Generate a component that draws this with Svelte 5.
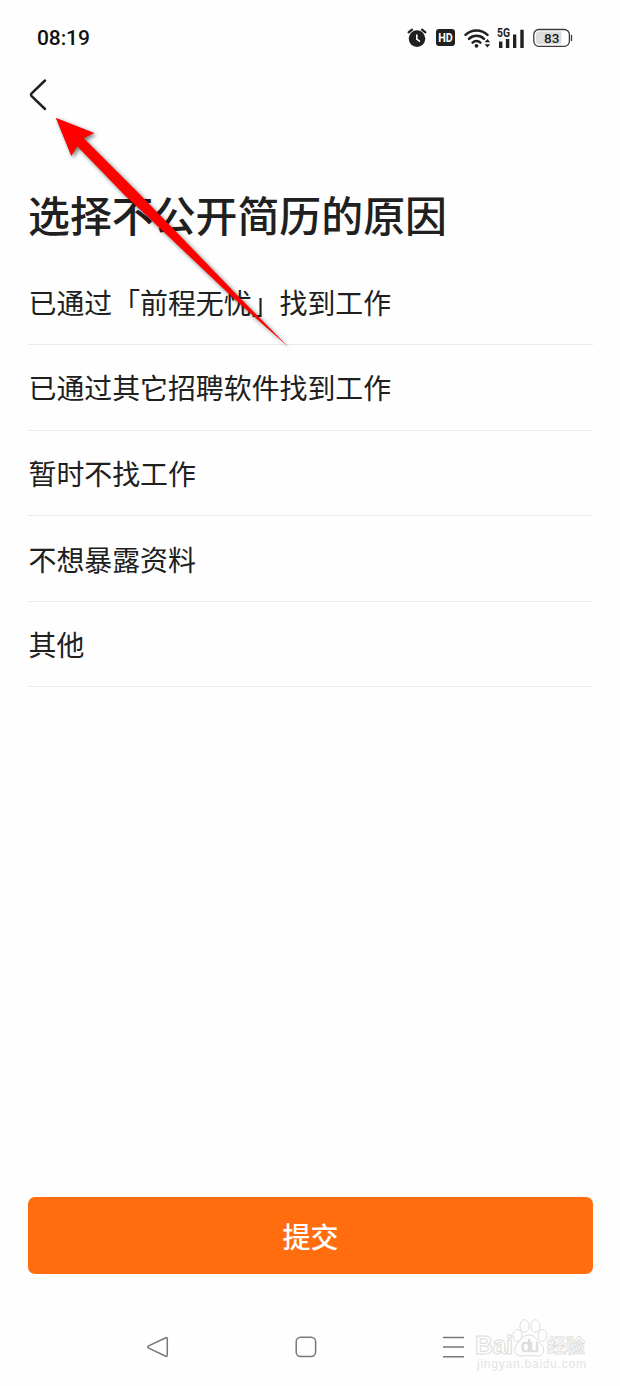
<script lang="ts">
  // Reason picker shown after a resume is switched to private: a flat list
  // of reasons and one submit button, framed by the phone's own bars.
  const reasons = [
    "已通过「前程无忧」找到工作",
    "已通过其它招聘软件找到工作",
    "暂时不找工作",
    "不想暴露资料",
    "其他",
  ];

  let picked = $state("");
</script>

<div class="screen">
  <header class="status">
    <span class="time">08:19</span>
    <div class="indicators">
      <svg class="alarm" width="20" height="22" viewBox="0 0 20 22" aria-hidden="true">
        <path d="M1.6 5.4 5 2.6M18.4 5.4 15 2.6" stroke="#202020" stroke-width="2.2" stroke-linecap="round" />
        <circle cx="10" cy="11.6" r="8.3" fill="#202020" />
        <path d="M9.8 8v4.2l2.6 2" fill="none" stroke="#fff" stroke-width="1.6" stroke-linecap="round" />
      </svg>
      <svg class="hd" width="19" height="17" viewBox="0 0 19 17" aria-hidden="true">
        <rect width="19" height="17" rx="3" fill="#202020" />
        <text x="9.5" y="13.2" text-anchor="middle" textLength="14.5" lengthAdjust="spacingAndGlyphs">HD</text>
      </svg>
      <svg class="wifi" width="28" height="22" viewBox="0 0 28 22" aria-hidden="true">
        <g fill="none" stroke="#202020" stroke-width="2.5" stroke-linecap="round">
          <path d="M1.5 7.8a16 16 0 0 1 22 0" />
          <path d="M5 11.8a11 11 0 0 1 15 0" />
          <path d="M8.6 15.6a5.8 5.8 0 0 1 7.8 0" />
        </g>
        <circle cx="12.5" cy="18.8" r="1.9" fill="#202020" />
        <path d="M20.6 15.2 23.4 12l2.8 3.2zM20.6 17.2h5.6l-2.8 3.4z" fill="#202020" />
      </svg>
      <svg class="signal" width="28" height="22" viewBox="0 0 28 22" aria-hidden="true">
        <text x="0" y="9.8" textLength="13" lengthAdjust="spacingAndGlyphs">5G</text>
        <path d="M2 14.5h3.4V21H2zM8.9 12h3.4v9H8.900zM16 7.500h3.300V21H16zM23.300 2.800h3.400V21h-3.400z" fill="#202020" />
      </svg>
      <svg class="battery" width="40" height="20" viewBox="0 0 40 20" aria-hidden="true">
        <rect x=".8" y="1.5" width="35.6" height="16.8" rx="5" fill="#fff" stroke="#3c3c3c" stroke-width="1.3" />
        <path d="M6 3.500h22.500v12.800H6a3 3 0 0 1-3-3V6.500a3 3 0 0 1 3-3z" fill="#dcdcdc" />
        <path d="M38.500 7.500v5" stroke="#3c3c3c" stroke-width="1.300" stroke-linecap="round" />
        <text x="18.700" y="14.800" text-anchor="middle">83</text>
      </svg>
    </div>
  </header>

  <nav class="topbar">
    <button type="button" class="back" aria-label="返回">
      <svg width="20" height="34" viewBox="0 0 20 34" aria-hidden="true">
        <path d="M17 2.500 3.400 15.600q-1 1.100 0 2.200L17 31" fill="none" stroke="#202020" stroke-width="2.500" stroke-linecap="round" />
      </svg>
    </button>
  </nav>

  <main>
    <h1>选择不公开简历的原因</h1>
    <ul>
      {#each reasons as reason (reason)}
        <li>
          <button type="button" aria-pressed={picked === reason} onclick={() => (picked = reason)}>
            {reason}
          </button>
        </li>
      {/each}
    </ul>
  </main>

  <button type="button" class="submit">提交</button>

  <footer class="navbar">
    <svg width="22" height="22" viewBox="0 0 22 22" aria-hidden="true">
      <path d="M18.800 1.700 1.700 9.800q-1.800 1.200 0 2.400L18.800 20.300q1.500.500 1.500-1.300V3q0-1.800-1.500-1.300z" />
    </svg>
    <svg width="22" height="22" viewBox="0 0 22 22" aria-hidden="true">
      <rect x="1.200" y="1.200" width="19.400" height="19.400" rx="4.500" />
    </svg>
    <svg width="22" height="22" viewBox="0 0 22 22" aria-hidden="true">
      <path d="M0 1.500h21M0 11h21M0 20.700h21" />
    </svg>
  </footer>

  <svg class="arrow" width="270" height="260" viewBox="0 0 270 260" aria-hidden="true">
    <path
      d="M15.700 17.700 54.300 33 43.700 38.300 97 91.500 133 128.500 198.500 196.500 248.700 247.300 196 200.500 127 135 84 94.500 37.300 46.300 31.300 56z"
    />
  </svg>

  <svg class="watermark" width="120" height="62" viewBox="0 0 120 62" aria-hidden="true">
    <g class="outline">
      <text x="0" y="39.500" font-size="25" textLength="38">Bai</text>
      <ellipse cx="42.500" cy="21.500" rx="4.500" ry="6" />
      <ellipse cx="49.500" cy="12" rx="4.600" ry="6.300" />
      <ellipse cx="60.500" cy="12" rx="4.600" ry="6.300" />
      <ellipse cx="67.500" cy="21.500" rx="4.300" ry="6" />
      <path d="M54 21c6 0 8 5 12 9 5 5 3 12-4 12-4 0-11-1-15 0-8 0-9-7-5-12 4-4 6-9 12-9z" />
      <text class="du" x="46" y="38" font-size="18" textLength="18">du</text>
      <text class="cjk" x="72" y="38.500" font-size="19" textLength="38">经验</text>
    </g>
    <text class="site" x="2" y="54" textLength="109">jingyan.baidu.com</text>
  </svg>
</div>

<style>
  :global(body) {
    margin: 0;
    background: #fff;
  }
  .screen {
    position: relative;
    display: flex;
    flex-direction: column;
    box-sizing: border-box;
    width: 620px;
    height: 1386px;
    overflow: hidden;
    background: #fefefe;
    color: #202020;
    font-family: "Noto Sans CJK SC", sans-serif;
  }
  button {
    padding: 0;
    border: 0;
    background: none;
    color: inherit;
    font: inherit;
    cursor: pointer;
  }
  svg {
    display: block;
    flex: none;
  }
  .status {
    display: flex;
    align-items: center;
    justify-content: space-between;
    height: 76px;
    padding: 0 47px 0 37px;
    box-sizing: border-box;
    font-family: Roboto, sans-serif;
  }
  .time {
    font-size: 21px;
    font-weight: 500;
    letter-spacing: -0.1px;
    color: #111;
  }
  .indicators {
    display: flex;
    align-items: center;
    margin-top: -1px;
  }
  .indicators text {
    font-family: Roboto, sans-serif;
    font-weight: 700;
    fill: #202020;
  }
  .alarm {
    margin-right: 9px;
  }
  .hd {
    margin-right: 9px;
  }
  .hd text {
    font-size: 13px;
    fill: #fff;
  }
  .wifi {
    margin-right: 5px;
  }
  .signal {
    margin-right: 8px;
  }
  .signal text {
    font-size: 12px;
  }
  .battery text {
    font-size: 13.5px;
    font-weight: 500;
  }
  .topbar {
    height: 38px;
    padding-left: 28px;
  }
  .back {
    display: block;
    margin-top: 2px;
  }
  main {
    flex: 1;
    padding: 0 27px 0 28px;
  }
  h1 {
    margin: 69.5px 0 0;
    font-size: 41.9px;
    font-weight: 500;
    line-height: 60px;
    white-space: nowrap;
  }
  ul {
    margin: 16px 0 0;
    padding: 0;
    list-style: none;
  }
  li {
    box-sizing: border-box;
    height: 85.6px;
    border-bottom: 1.5px solid #e9e9e9;
  }
  li button {
    display: block;
    width: 100%;
    height: 100%;
    padding-left: 0.5px;
    font-size: 27.9px;
    text-align: left;
    white-space: nowrap;
  }
  .submit {
    flex: none;
    height: 77px;
    margin: 0 27px 0 28px;
    border-radius: 7px;
    background: #ff6d0e;
    color: #fff;
    font-size: 28px;
    font-weight: 500;
  }
  .navbar {
    display: flex;
    align-items: center;
    gap: 126px;
    height: 112px;
    padding: 34px 0 0 147px;
    box-sizing: border-box;
  }
  .navbar svg {
    fill: none;
    stroke: #777;
    stroke-width: 1.5;
  }
  .arrow {
    position: absolute;
    left: 40px;
    top: 100px;
    fill: #fe0000;
    filter: drop-shadow(2px 2px 2px rgba(0, 0, 0, 0.55));
  }
  .watermark {
    position: absolute;
    left: 475px;
    top: 1314px;
    font-family: "Liberation Sans", sans-serif;
  }
  .outline {
    fill: #fefefe;
    stroke: #dcdcdc;
    stroke-width: 1;
    font-weight: 700;
  }
  .outline .du {
    font-weight: 400;
    fill: #dcdcdc;
    stroke-width: 0.5;
  }
  .outline .cjk {
    font-family: "Noto Sans CJK SC", sans-serif;
    stroke-width: 0.8;
  }
  .site {
    font-size: 12px;
    fill: #e4e4e4;
  }
</style>
